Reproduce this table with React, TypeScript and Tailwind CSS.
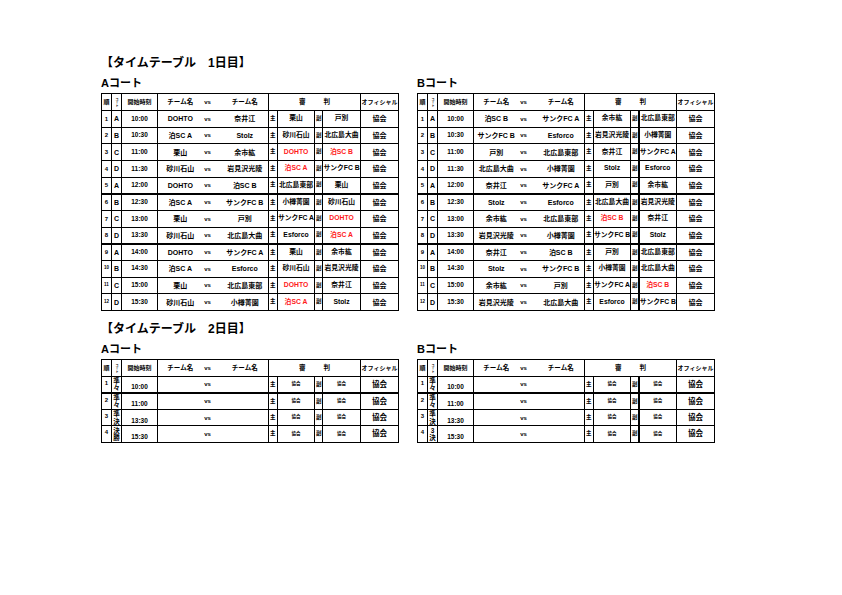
import React from "react";

type Row = [number, string, string, string, string, string, string];

const day1A: Row[] = [
  [1, "A", "10:00", "DOHTO", "奈井江", "栗山", "戸別"],
  [2, "B", "10:30", "泊SC A", "Stolz", "砂川石山", "北広島大曲"],
  [3, "C", "11:00", "栗山", "余市紘", "*DOHTO", "*泊SC B"],
  [4, "D", "11:30", "砂川石山", "岩見沢光陵", "*泊SC A", "サンクFC B"],
  [5, "A", "12:00", "DOHTO", "泊SC B", "北広島東部", "栗山"],
  [6, "B", "12:30", "泊SC A", "サンクFC B", "小樽菁園", "砂川石山"],
  [7, "C", "13:00", "栗山", "戸別", "サンクFC A", "*DOHTO"],
  [8, "D", "13:30", "砂川石山", "北広島大曲", "Esforco", "*泊SC A"],
  [9, "A", "14:00", "DOHTO", "サンクFC A", "栗山", "余市紘"],
  [10, "B", "14:30", "泊SC A", "Esforco", "砂川石山", "岩見沢光陵"],
  [11, "C", "15:00", "栗山", "北広島東部", "*DOHTO", "奈井江"],
  [12, "D", "15:30", "砂川石山", "小樽菁園", "*泊SC A", "Stolz"],
];

const day1B: Row[] = [
  [1, "A", "10:00", "泊SC B", "サンクFC A", "余市紘", "北広島東部"],
  [2, "B", "10:30", "サンクFC B", "Esforco", "岩見沢光陵", "小樽菁園"],
  [3, "C", "11:00", "戸別", "北広島東部", "奈井江", "サンクFC A"],
  [4, "D", "11:30", "北広島大曲", "小樽菁園", "Stolz", "Esforco"],
  [5, "A", "12:00", "奈井江", "サンクFC A", "戸別", "余市紘"],
  [6, "B", "12:30", "Stolz", "Esforco", "北広島大曲", "岩見沢光陵"],
  [7, "C", "13:00", "余市紘", "北広島東部", "*泊SC B", "奈井江"],
  [8, "D", "13:30", "岩見沢光陵", "小樽菁園", "サンクFC B", "Stolz"],
  [9, "A", "14:00", "奈井江", "泊SC B", "戸別", "北広島東部"],
  [10, "B", "14:30", "Stolz", "サンクFC B", "小樽菁園", "北広島大曲"],
  [11, "C", "15:00", "余市紘", "戸別", "サンクFC A", "*泊SC B"],
  [12, "D", "15:30", "岩見沢光陵", "北広島大曲", "Esforco", "サンクFC B"],
];

const day2A: [number, string, string, string][] = [
  [1, "準", "々", "10:00"],
  [2, "準", "々", "11:00"],
  [3, "準", "決", "13:30"],
  [4, "決", "勝", "15:30"],
];

const day2B: [number, string, string, string][] = [
  [1, "準", "々", "10:00"],
  [2, "準", "々", "11:00"],
  [3, "準", "決", "13:30"],
  [4, "3", "決", "15:30"],
];

const base = "border border-black p-0 text-center font-bold leading-none whitespace-nowrap overflow-hidden";
const td = `${base} align-middle`;

function Cols() {
  return (
    <colgroup>
      <col className="w-[10px]" />
      <col className="w-[10px]" />
      <col className="w-[36px]" />
      <col className="w-[45px]" />
      <col className="w-[10px]" />
      <col className="w-[56px]" />
      <col className="w-[9px]" />
      <col className="w-[37px]" />
      <col className="w-[8px]" />
      <col className="w-[38px]" />
      <col className="w-[38px]" />
    </colgroup>
  );
}

function Header() {
  return (
    <tr className="h-[17px]">
      <th className={`${td} text-[6px]`}>順</th>
      <th className={td}>
        <span className="inline-block text-[3px] leading-[3px] [writing-mode:vertical-rl]">コート</span>
      </th>
      <th className={`${td} text-[6px]`}>開始時刻</th>
      <th className={`${td} border-r-0 text-[6.5px]`}>チーム名</th>
      <th className={`${td} border-x-0 text-[6px]`}>vs</th>
      <th className={`${td} border-l-0 pl-[9px] text-[6.5px]`}>チーム名</th>
      <th colSpan={4} className={`${td} text-[6.5px]`}>
        <span>審</span>
        <span className="ml-[18px]">判</span>
      </th>
      <th className={`${td} text-[6px]`}>オフィシャル</th>
    </tr>
  );
}

function Name({ v }: { v: string }) {
  if (v.startsWith("*")) return <span className="text-[#ff1a1a]">{v.slice(1)}</span>;
  return <span>{v}</span>;
}

function Day1Table({ rows, b }: { rows: Row[]; b?: boolean }) {
  return (
    <table className="table-fixed border-collapse border-[1.5px] border-black w-[297px]">
      <Cols />
      <tbody>
        <Header />
        {rows.map(([no, court, time, t1, t2, r1, r2]) => {
          const top = no === 6 || no === 9 ? "border-t-2" : "";
          return (
            <tr key={no} className="h-[16.67px]">
              <td className={`${td} ${top} ${no >= 10 ? "text-[4.5px]" : "text-[6px]"}`}>{no}</td>
              <td className={`${td} ${top} text-[7px]`}>{court}</td>
              <td className={`${td} ${top} text-[6.5px]`}>{time}</td>
              <td className={`${td} ${top} border-r-0 text-[7px]`}>{t1}</td>
              <td className={`${td} ${top} border-x-0 text-[6px]`}>vs</td>
              <td className={`${td} ${top} border-l-0 pl-[9px] text-[7px]`}>{t2}</td>
              <td className={`${td} ${top} text-[5.5px] text-left pl-[1px]`}>主</td>
              <td className={`${td} ${top} text-[6.8px]`}>
                <Name v={r1} />
              </td>
              <td className={`${td} ${top} text-[5.5px] text-left pl-[1px]`}>副</td>
              <td className={`${td} ${top} ${b ? "border-l-2" : ""} text-[6.8px]`}>
                <Name v={r2} />
              </td>
              <td className={`${td} ${top} text-[7px]`}>協会</td>
            </tr>
          );
        })}
      </tbody>
    </table>
  );
}

function Day2Table({ rows, b }: { rows: [number, string, string, string][]; b?: boolean }) {
  return (
    <table className="table-fixed border-collapse border-[1.5px] border-black w-[297px]">
      <Cols />
      <tbody>
        <Header />
        {rows.map(([no, k1, k2, time]) => {
          const top = no === 2 ? "border-t-2" : "";
          return (
            <tr key={no} className="h-[16.5px]">
              <td className={`${base} align-top pt-[3px] ${top} text-[6px]`}>{no}</td>
              <td className={`${td} ${top} text-[6.5px]`}>
                <div className="flex flex-col items-center leading-[7.5px]">
                  <span>{k1}</span>
                  <span>{k2}</span>
                </div>
              </td>
              <td className={`${base} align-bottom pb-[1px] ${top} text-[6.5px]`}>{time}</td>
              <td className={`${td} ${top} border-r-0`}></td>
              <td className={`${td} ${top} border-x-0 text-[6px]`}>vs</td>
              <td className={`${td} ${top} border-l-0`}></td>
              <td className={`${td} ${top} text-[5.5px] text-left pl-[1px]`}>主</td>
              <td className={`${td} ${top} text-[4.5px]`}>協会</td>
              <td className={`${td} ${top} text-[5.5px] text-left pl-[1px]`}>副</td>
              <td className={`${td} ${top} ${b ? "border-l-2" : ""} text-[4.5px]`}>協会</td>
              <td className={`${td} ${top} text-[7.5px]`}>協会</td>
            </tr>
          );
        })}
      </tbody>
    </table>
  );
}

function Court({ label, children }: { label: string; children: React.ReactNode }) {
  return (
    <div className="flex flex-col">
      <div className="h-[14px] mt-[5px] text-[11px] leading-[14px] font-bold">{label}</div>
      <div className="mt-[3px]">{children}</div>
    </div>
  );
}

export default function App() {
  return (
    <div className="w-[842px] h-[595px] bg-white text-black pt-[55px] pl-[101px] font-['Liberation_Sans','Noto_Sans_CJK_JP',sans-serif]">
      <div className="h-[16px] text-[12px] leading-[16px] font-bold">【タイムテーブル　1日目】</div>
      <div className="flex gap-[18px]">
        <Court label="Aコート">
          <Day1Table rows={day1A} />
        </Court>
        <Court label="Bコート">
          <Day1Table rows={day1B} b />
        </Court>
      </div>
      <div className="mt-[10px] h-[16px] text-[12px] leading-[16px] font-bold">【タイムテーブル　2日目】</div>
      <div className="flex gap-[18px]">
        <Court label="Aコート">
          <Day2Table rows={day2A} />
        </Court>
        <Court label="Bコート">
          <Day2Table rows={day2B} b />
        </Court>
      </div>
    </div>
  );
}
